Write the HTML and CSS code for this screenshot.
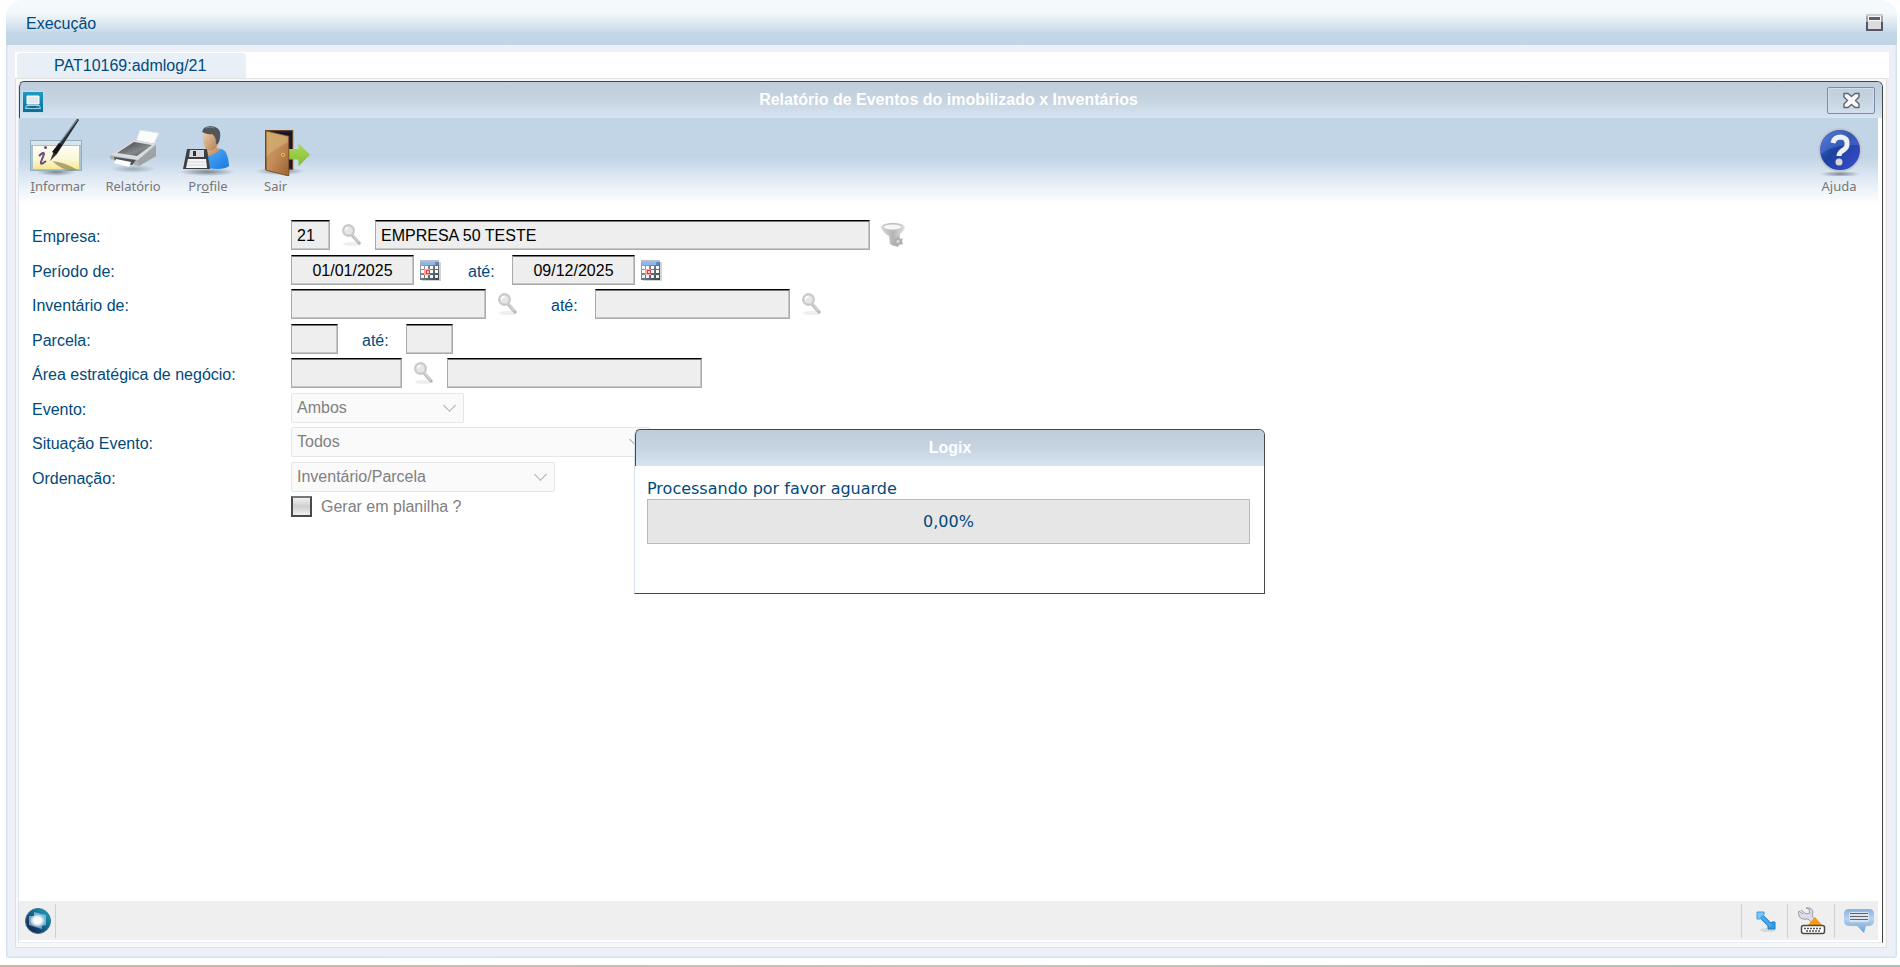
FILE: index.html
```html
<!DOCTYPE html>
<html lang="pt-BR">
<head>
<meta charset="utf-8">
<title>Execução</title>
<link rel="stylesheet" href="styles.css">
</head>
<body>
<svg class="defs" aria-hidden="true">
  <defs>
    <radialGradient id="shade"><stop offset="0" stop-color="#5d6670" stop-opacity=".75"/><stop offset="1" stop-color="#5d6670" stop-opacity="0"/></radialGradient>
    <linearGradient id="paper" x1="0" y1="0" x2="0" y2="1"><stop offset="0" stop-color="#fdfdf6"/><stop offset=".55" stop-color="#fbf8d8"/><stop offset="1" stop-color="#f7e98f"/></linearGradient>
    <linearGradient id="dark" x1="0" y1="0" x2="1" y2="1"><stop offset="0" stop-color="#3a3c3f"/><stop offset=".6" stop-color="#85888b"/><stop offset="1" stop-color="#55585b"/></linearGradient>
    <linearGradient id="skin" x1="0" y1="0" x2="1" y2="1"><stop offset="0" stop-color="#f3d3b4"/><stop offset="1" stop-color="#b07c4c"/></linearGradient>
    <linearGradient id="shirt" x1="0" y1="0" x2="1" y2="1"><stop offset="0" stop-color="#57b0f8"/><stop offset="1" stop-color="#1778e0"/></linearGradient>
    <linearGradient id="wood" x1="0" y1="0" x2="1" y2="1"><stop offset="0" stop-color="#c79c5c"/><stop offset=".45" stop-color="#c58f5c"/><stop offset="1" stop-color="#9c6230"/></linearGradient>
    <linearGradient id="leaf" x1="0" y1="0" x2="0" y2="1"><stop offset="0" stop-color="#a9dc5a"/><stop offset="1" stop-color="#86bb2e"/></linearGradient>
    <linearGradient id="help" x1="0" y1="0" x2="1" y2="1"><stop offset="0" stop-color="#4d78e0"/><stop offset=".45" stop-color="#1d409e"/><stop offset="1" stop-color="#3a4fd8"/></linearGradient>
    <linearGradient id="globe" x1="0" y1="1" x2="1" y2="0"><stop offset=".1" stop-color="#1e1c4c"/><stop offset=".5" stop-color="#0f6288"/><stop offset="1" stop-color="#0db2cf"/></linearGradient>
    <radialGradient id="glow"><stop offset="0" stop-color="#fff"/><stop offset=".55" stop-color="#fff" stop-opacity=".95"/><stop offset="1" stop-color="#cfe0ee" stop-opacity=".5"/></radialGradient>
    <linearGradient id="bubble" x1="0" y1="0" x2="0" y2="1"><stop offset="0" stop-color="#86b1de"/><stop offset=".4" stop-color="#b7d3ef"/><stop offset="1" stop-color="#6fa2d6"/></linearGradient>
    <linearGradient id="teal" x1="0" y1="0" x2="0" y2="1"><stop offset="0" stop-color="#1c9bc4"/><stop offset="1" stop-color="#0c6f98"/></linearGradient>
    <linearGradient id="steel" x1="0" y1="0" x2="1" y2="0"><stop offset="0" stop-color="#dcdcdc"/><stop offset=".5" stop-color="#b5b5b5"/><stop offset="1" stop-color="#e4e4e4"/></linearGradient>
    <linearGradient id="calbody" x1="0" y1="0" x2="1" y2="1"><stop offset="0" stop-color="#aab4bc"/><stop offset="1" stop-color="#3c4248"/></linearGradient>
    <symbol id="lens" viewBox="0 0 20 22">
      <ellipse cx="11" cy="20" rx="9" ry="2" fill="#efefef"/>
      <path d="M11 11l7 8" stroke="#b9b9b9" stroke-width="3.400" stroke-linecap="round"/>
      <path d="M11.500 11l6 7" stroke="#d8d8d8" stroke-width="1.200"/>
      <circle cx="7.500" cy="6.500" r="5.300" fill="#e6e6e6" stroke="#cbcbcb" stroke-width="2.400"/>
      <path d="M4.500 6.500a3 3 0 0 1 3-3" stroke="#fff" stroke-width="1.500" fill="none"/>
    </symbol>
    <symbol id="calendar" viewBox="0 0 21 21">
      <path d="M2 2h19v19H2z" fill="#d5d5d5"/>
      <path d="M0 0h19v20H0z" fill="url(#calbody)"/>
      <path d="M0 0h19v2H0z" fill="#b9bec4"/><path d="M1 2h17v3H1z" fill="#8fb6e6"/><path d="M15 2h3v3h-3z" fill="#5a8ad0"/>
      <path d="M1 6h3v3H1zM5 6h3v3H5zM10 6h3v3h-3zM15 6h3v3h-3z" fill="#fff"/>
      <path d="M1 10h3v3H1zM10 10h3v3h-3zM15 10h3v3h-3z" fill="#fff"/>
      <path d="M1 15h3v3H1zM5 15h3v3H5zM10 15h3v3h-3zM15 15h3v3h-3z" fill="#dffcfa"/>
      <path d="M4 9h6v6H4z" fill="#f7a49c"/><path d="M6 10h4v4H6z" fill="#ee4034"/><path d="M7 11h2v2H7z" fill="#ffd6d0"/>
    </symbol>
  </defs>
</svg>

<div class="shell">
  <header class="shell-bar">
    <h1>Execução</h1>
    <button type="button" class="restore" aria-label="Restaurar">
      <svg width="17" height="17" viewBox="0 0 17 17"><path d="M0 0h17v17H0z" fill="#54566a"/><path d="M0 0h17v8H0z" fill="#a4a5ad"/><path d="M0 0h17v2H0z" fill="#cfcfd2"/><path d="M2 2h13v13H2z" fill="#dcdcdc"/><path d="M2 2h13v5H2z" fill="#f8f8f8"/><path d="M3 3h11v3H3z" fill="#5b6078"/></svg>
    </button>
  </header>

  <div class="shell-body">
    <nav class="tabs"><a href="#programa" class="tab">PAT10169:admlog/21</a></nav>

    <div class="stage">
      <main class="window" id="programa">
        <header class="window-bar">
          <svg class="window-icon" width="22" height="22" viewBox="0 0 22 22"><path d="M0 0h22v22H0z" fill="#bfe0ee"/><path d="M1 1h20v20H1z" fill="url(#teal)"/><path d="M5 5h12v8H5z" fill="#e4e8ec" stroke="#fff"/><path d="M4.500 14.500h13l1 3h-15z" fill="#1d83a8" stroke="#9fd0e2"/><path d="M8 16h6" stroke="#0a4f6c"/></svg>
          <h2>Relatório de Eventos do imobilizado x Inventários</h2>
          <button type="button" class="close" aria-label="Fechar">
            <svg width="19" height="17" viewBox="0 0 19 17"><path d="M2 1.500h4l3.500 3 3.500-3h4v3.500l-3.500 3.500 3.500 3.500v3.500h-4l-3.500-3-3.500 3H2v-3.500l3.500-3.500L2 5z" fill="#f8f8f8" stroke="#5b6374" stroke-width="1.400" stroke-linejoin="round"/></svg>
          </button>
        </header>

        <div class="toolbar">
          <button type="button" class="tool">
            <svg width="60" height="58" viewBox="0 0 60 58">
              <ellipse cx="28" cy="54" rx="20" ry="4" fill="url(#shade)"/>
              <rect x="2.500" y="22.500" width="51" height="30" fill="#a9c3d1" stroke="#8fb0c0"/><path d="M3 23h50v4H3z" fill="#d9e4e9"/>
              <path d="M5 28h46v23H5z" fill="url(#paper)"/>
              <path d="M11 38q5-5 5-2l-3 8q-1 4 5-1" fill="none" stroke="#6d4f86" stroke-width="2"/><circle cx="17.500" cy="29.500" r="1.500" fill="#6d4f86"/>
              <path d="M24 43q12 1 26 9l-8 1q-9-2-18-10z" fill="#8a8660" opacity=".7"/>
              <path d="M22 43l4-10L48 2q2-2 3 0L29 36z" fill="#2d3236"/><path d="M30 27L49 2" stroke="#81939f" stroke-width="1.200"/><path d="M31 25l3 2-6 9-4-2z" fill="#111"/>
            </svg>
            <span><u>I</u>nformar</span>
          </button>
          <button type="button" class="tool">
            <svg width="60" height="58" viewBox="0 0 60 58">
              <ellipse cx="30" cy="51" rx="23" ry="4" fill="url(#shade)" opacity=".6"/>
              <path d="M37 12l19 3-9 19-16-5z" fill="#fbfcfc" stroke="#dde2e5"/>
              <path d="M7 37l24-15 22 4v12L36 48 7 41z" fill="#aeb1b4"/><path d="M7 37l24-15 22 4-18 16z" fill="#dadddf"/>
              <path d="M14 35l17-11 18 3-15 11z" fill="url(#dark)"/>
              <path d="M35 42l18-14v10L36 48z" fill="#9ea2a5"/><path d="M11 39l22 3-4 5-17-4z" fill="#4c4f52"/>
              <path d="M13 41l15 3-2 5-15-4z" fill="#fff"/>
            </svg>
            <span>Relatório</span>
          </button>
          <button type="button" class="tool">
            <svg width="60" height="58" viewBox="0 0 60 58">
              <ellipse cx="29" cy="54" rx="28" ry="4" fill="url(#shade)"/>
              <path d="M26 50q-1-10 5-16 6-4 12-3 7 1 8 17-3 3-12 3z" fill="url(#shirt)"/>
              <path d="M26 33l10-6 6 5q-7 6-14 6z" fill="url(#skin)"/>
              <path d="M25 15q8-8 15 0 2 17-8 18-8-2-7-18z" fill="url(#skin)"/>
              <path d="M24 14q1-6 9-6 11 1 9 12-1 7-4 6 0-8-4-10-4 1-10-2z" fill="#50565c"/>
              <path d="M28 10q5-2 8 0" stroke="#878d92" fill="none"/>
              <path d="M9 31h20l3 20H5z" fill="#3d4043"/><path d="M12 32h14v7H11z" fill="#d7d9db"/><path d="M15 33h3v5h-3z" fill="#303336"/>
              <path d="M10 41h18l1 9H8z" fill="#f5f5f5"/><path d="M10 44h17M9 47h18" stroke="#d5d8da"/>
            </svg>
            <span>Pr<u>o</u>file</span>
          </button>
          <button type="button" class="tool tool-exit">
            <svg width="60" height="58" viewBox="0 0 60 60">
              <ellipse cx="27" cy="55" rx="25" ry="4" fill="url(#shade)"/>
              <path d="M12 13h28v40H12z" fill="#171433" stroke="#6b4420" stroke-width="1.200"/>
              <path d="M34 32h12v-6l12 12-12 12v-7H34z" fill="url(#leaf)"/>
              <path d="M12.500 13.500L36 19v41l-23.500-6z" fill="url(#wood)" stroke="#7f5023"/><path d="M13 14l22 5v6Q22 31 13 40z" fill="#d9b97b" opacity=".5"/>
              <circle cx="30" cy="38" r="2" fill="#f5c542"/><circle cx="30" cy="38" r="1" fill="#a5661a"/>
            </svg>
            <span>Sair</span>
          </button>
          <button type="button" class="tool tool-help">
            <svg width="60" height="58" viewBox="0 0 60 58">
              <ellipse cx="31" cy="56" rx="20" ry="3" fill="url(#shade)"/>
              <circle cx="31" cy="32" r="21" fill="url(#help)" stroke="#c3c6cb" stroke-width="2"/>
              <path d="M12 37Q20 26 51 27a20.500 20.500 0 0 0-40 7z" fill="#7197ec" opacity=".3"/>
              <path d="M24 25q1-6 8-6 7 1 6 8 0 3-5 6-3 2-3 5" fill="none" stroke="#f0f0f0" stroke-width="5"/><circle cx="30" cy="44" r="3.500" fill="#d8d8d8"/>
            </svg>
            <span>Ajuda</span>
          </button>
        </div>

        <form class="form">
          <div class="row">
            <label class="caption" for="empresa">Empresa:</label>
            <input id="empresa" class="field w-company" type="text" value="21" readonly>
            <button type="button" class="lookup" disabled aria-label="Pesquisar empresa"><svg width="20" height="22"><use href="#lens"/></svg></button>
            <input class="field w-name after-lookup" type="text" value="EMPRESA 50 TESTE" readonly aria-label="Nome da empresa">
            <button type="button" class="lookup" disabled aria-label="Filtro"><svg width="24" height="24" viewBox="0 0 24 24"><path d="M0 4Q1 0 12 0t12 4q0 3-5 7v8l-4 4q-4 0-6-2l-1-8Q1 9 0 4z" fill="url(#steel)"/><ellipse cx="11.500" cy="4" rx="9.500" ry="3" fill="#f7f7f7" stroke="#c4c4c4"/><path d="M12 15l3 1 2-3 2 3 3-1-1 3 1 3-4 1-1 2-3-1-3-2 2-2z" fill="#b0b0b0"/><circle cx="17" cy="18.500" r="1.500" fill="#ddd"/></svg></button>
          </div>
          <div class="row">
            <label class="caption" for="periodo-de">Período de:</label>
            <input id="periodo-de" class="field w-date" type="text" value="01/01/2025" readonly>
            <button type="button" class="pick" aria-label="Calendário, data inicial"><svg width="21" height="21"><use href="#calendar"/></svg></button>
            <label class="until" for="periodo-ate">até:</label>
            <input id="periodo-ate" class="field w-date" type="text" value="09/12/2025" readonly>
            <button type="button" class="pick" aria-label="Calendário, data final"><svg width="21" height="21"><use href="#calendar"/></svg></button>
          </div>
          <div class="row">
            <label class="caption" for="inv-de">Inventário de:</label>
            <input id="inv-de" class="field w-inventory" type="text" readonly>
            <button type="button" class="lookup" disabled aria-label="Pesquisar inventário inicial"><svg width="20" height="22"><use href="#lens"/></svg></button>
            <label class="until" for="inv-ate">até:</label>
            <input id="inv-ate" class="field w-inventory" type="text" readonly>
            <button type="button" class="lookup" disabled aria-label="Pesquisar inventário final"><svg width="20" height="22"><use href="#lens"/></svg></button>
          </div>
          <div class="row">
            <label class="caption" for="parc-de">Parcela:</label>
            <input id="parc-de" class="field w-parcel" type="text" readonly>
            <label class="until" for="parc-ate">até:</label>
            <input id="parc-ate" class="field w-parcel" type="text" readonly>
          </div>
          <div class="row">
            <label class="caption" for="area">Área estratégica de negócio:</label>
            <input id="area" class="field w-area" type="text" readonly>
            <button type="button" class="lookup" disabled aria-label="Pesquisar área"><svg width="20" height="22"><use href="#lens"/></svg></button>
            <input class="field w-area-name after-lookup" type="text" readonly aria-label="Descrição da área">
          </div>
          <div class="row">
            <label class="caption" for="evento">Evento:</label>
            <span class="choice w-event"><select id="evento" disabled><option>Ambos</option></select></span>
          </div>
          <div class="row">
            <label class="caption" for="situacao">Situação Evento:</label>
            <span class="choice w-status"><select id="situacao" disabled><option>Todos</option></select></span>
          </div>
          <div class="row">
            <label class="caption" for="ordem">Ordenação:</label>
            <span class="choice w-order"><select id="ordem" disabled><option>Inventário/Parcela</option></select></span>
          </div>
          <div class="row row-check">
            <input id="planilha" class="tick" type="checkbox" disabled>
            <label class="tick-label" for="planilha">Gerar em planilha ?</label>
          </div>
        </form>

        <footer class="status">
          <span class="cell cell-first"><svg width="26" height="26" viewBox="0 0 26 26"><circle cx="13" cy="13" r="12.500" fill="url(#globe)" stroke="#3f6f8c"/><path d="M9 4l12 3v10l-4 1v3L4 17V8h5z" fill="#c6d7e8" opacity=".6"/><ellipse cx="12.500" cy="12.500" rx="7" ry="6" fill="url(#glow)"/></svg></span>
          <button type="button" class="cell cell-size" aria-label="Redimensionar"><svg width="22" height="22" viewBox="0 0 22 22"><ellipse cx="12" cy="20" rx="8" ry="2" fill="#d5d8da"/><path d="M5 6l10 10" stroke="#2d86c8" stroke-width="5"/><path d="M1 2h7v3l-4 4H1z" fill="#7cc8f8" stroke="#3c9ee4"/><path d="M19 19h-7v-3l4-4h3z" fill="#2f9bea" stroke="#1f7cc4"/><path d="M5 6l10 10" stroke="#4ba9ea" stroke-width="3"/></svg></button>
          <button type="button" class="cell cell-keys" aria-label="Configurações"><svg width="28" height="28" viewBox="0 0 28 28"><path d="M3 3l5 4 4-1-1-4-3-1q6-1 7 4l-1 4 5 6-3 3-6-6q-7 1-9-3-1-3 0-5l4 3" fill="#dcdde8" stroke="#9a9cad"/><path d="M10 18l7-8 7 8z" fill="#f59a12"/><rect x="3.500" y="18.500" width="23" height="8" rx="2" fill="#fff" stroke="#4b4b4b" stroke-width="1.500"/><path d="M6 21.500h18M8 24h14" stroke="#555" stroke-width="1.500" stroke-dasharray="2 1"/></svg></button>
          <button type="button" class="cell" aria-label="Mensagens"><svg width="30" height="26" viewBox="0 0 30 26"><path d="M5 1h20q5 0 5 5v7q0 5-6 5h-2l-2 7-7-7H6q-6 0-6-5V6q0-5 5-5z" fill="url(#bubble)"/><rect x="5" y="4" width="20" height="10" rx="2" fill="#dbe4ee"/><path d="M6 5.500h18M6 8.500h18M6 11.500h18" stroke="#5b6570" stroke-width="1.200"/></svg></button>
        </footer>
      </main>
    </div>
  </div>
</div>

<div class="overlay">
  <section class="dialog" role="dialog" aria-labelledby="dlg-title">
    <h2 class="dialog-bar" id="dlg-title">Logix</h2>
    <div class="dialog-body">
      <p id="dlg-text">Processando por favor aguarde</p>
      <div class="meter" role="progressbar" aria-valuenow="0" aria-labelledby="dlg-text">0,00%</div>
    </div>
  </section>
</div>
</body>
</html>
```
FILE: styles.css
```css
* { box-sizing: border-box; }

body {
  margin: 0;
  height: 100vh;
  padding: 0 3px 7px 6px;
  display: flex;
  flex-direction: column;
  overflow: hidden;
  background: linear-gradient(90deg, #cbb5a8, #c9c4ba 50%, #adc0b6) bottom / 100% 2px no-repeat #fff;
  color: #004a7c;
  font: 16px/20px Arial, "Liberation Sans", sans-serif;
}

h1, h2, p { margin: 0; font-size: 16px; line-height: 20px; }

button {
  margin: 0;
  padding: 0;
  border: 0;
  background: none;
  font: inherit;
  color: inherit;
}

svg { display: block; flex: none; }
.defs { position: absolute; width: 0; height: 0; }

/* outer frame */
.shell { flex: 1; display: flex; flex-direction: column; margin-bottom: 2px; min-height: 0; }

.shell-bar {
  height: 45px;
  padding: 0 14px 0 20px;
  display: flex;
  align-items: center;
  justify-content: space-between;
  border-radius: 16px 16px 0 0;
  background: linear-gradient(#f4f9fd, #f4f9fc 12px, #edf4f8 16px, #c3d6e7 34px, #c2d5e7);
}

.shell-bar h1 { font-weight: 400; padding-top: 2px; }

.shell-body {
  flex: 1;
  display: flex;
  flex-direction: column;
  min-height: 0;
  padding: 7px 7px 9px 8px;
  background: #edf1f7;
  border: 1px solid #d3e2f1;
  border-top: 0;
  box-shadow: inset 1px -1px #dfeaf5, inset -1px 0 #dfeaf5;
  border-radius: 0 0 3px 3px;
}

.tabs { display: flex; align-items: flex-start; height: 26px; padding: 1px 0 0 2px; background: #fff; }

.tab {
  padding: 3px 40px 2px 37px;
  border-radius: 4px 4px 0 0;
  background: #e8eff7;
  color: inherit;
  text-decoration: none;
}

.stage {
  flex: 1;
  display: flex;
  min-height: 0;
  margin-right: 2px;
  padding: 2px 3px 4px 2px;
  background: #f8f8f8;
  border: 1px solid #e0e0e0;
}

/* program window */
.window {
  flex: 1;
  display: flex;
  flex-direction: column;
  min-width: 0;
  border: 1px solid #444;
  border-left-color: #dce6f2;
  border-bottom-color: #e6eaf2;
  border-radius: 6px 6px 0 0;
  background: #fff;
}

.window-bar {
  height: 36px;
  padding: 0 7px 0 2px;
  display: grid;
  grid-template-columns: 48px 1fr 48px;
  align-items: center;
  border-left: 1px solid #444;
  border-radius: 5px 5px 0 0;
  background: linear-gradient(#bfccdb, #c6d3e0 50%, #d7e4f1);
}

.window-bar h2, .dialog-bar { color: #fff; text-align: center; font-weight: 700; }
.window-icon { margin-top: 4px; }

.close {
  display: flex;
  align-items: center;
  justify-content: center;
  height: 27px;
  border: 1px solid #7e8ca3;
  border-radius: 2px;
  box-shadow: inset 0 0 0 1px #d3deea;
}

.toolbar {
  display: flex;
  gap: 15px;
  height: 90px;
  margin-right: 4px;
  padding-left: 9px;
  background: linear-gradient(#c2d5e7, #c2d5e7 44%, #e3ecf5 70%, #fff 96%);
}

.tool {
  width: 60px;
  display: flex;
  flex-direction: column;
  align-items: center;
  color: #777;
  font: 13px/20px "Noto Sans", sans-serif;
}

.tool-exit span { align-self: flex-start; padding-left: 11px; }
.tool-help { margin-left: auto; margin-right: 9px; }

/* parameters */
.form { flex: 1; padding: 12px 13px; }

.row { display: flex; align-items: center; height: 30px; margin-bottom: 5px; }
.row:nth-child(even) { margin-bottom: 4px; }
.caption { width: 259px; padding-top: 4px; }
.until { width: 27px; margin: 0 17px 0 24px; padding-top: 4px; }

.field {
  height: 30px;
  padding: 1px 5px 0;
  border: 1px solid #aaa;
  border-top-color: #000;
  border-radius: 0;
  background: #eee;
  box-shadow: inset 0 1px #777, inset -1px -1px #c6c6c6;
  color: #000;
  font: inherit;
}

.w-company { width: 39px; }
.w-name { width: 495px; }
.w-date { width: 123px; text-align: center; }
.w-inventory { width: 195px; }
.w-parcel { width: 47px; }
.w-area { width: 111px; }
.w-area-name { width: 255px; }
.after-lookup { margin-left: 4px; }
.w-event { width: 173px; }
.w-status { width: 359px; }
.w-order { width: 264px; }

.lookup { margin: 0 10px 0 11px; }
.pick { margin: 0 3px 0 6px; }

.choice { position: relative; }

.choice select {
  width: 100%;
  height: 30px;
  padding: 0 5px;
  appearance: none;
  border: 1px solid #e6e6e6;
  border-radius: 2px;
  background: #fafafa;
  color: #808080;
  font: inherit;
  opacity: 1;
}

.choice::after {
  content: "";
  position: absolute;
  right: 10px;
  top: 8px;
  width: 8px;
  height: 8px;
  border: solid #aaa;
  border-width: 0 1px 1px 0;
  transform: rotate(45deg);
}

.row-check { height: 21px; padding-left: 259px; }

.tick {
  appearance: none;
  width: 21px;
  height: 21px;
  margin: 0 9px 0 0;
  border: 2px solid #4a4a4a;
  border-top-color: #777;
  background: linear-gradient(#f0f0f0, #cfcfcf 50%, #f0f0f0);
}

.tick-label { color: #808080; }

/* status bar */
.status {
  display: flex;
  align-items: center;
  height: 39px;
  margin: 0 4px 2px 0;
  background: #efefef;
}

.cell { display: flex; align-items: center; height: 34px; padding: 0 4px 0 9px; border-left: 1px solid #cfcfcf; }
.cell-first { padding: 0 4px 0 6px; margin-right: auto; border-left: 0; border-right: 1px solid #cfcfcf; }
.cell-size { padding: 0 9px 0 14px; }
.cell-keys { padding: 0 8px 0 10px; }

/* progress dialog */
.overlay {
  position: fixed;
  inset: 56px 1px 0 0;
  display: flex;
  align-items: center;
  justify-content: center;
}

.dialog {
  width: 631px;
  border: 1px solid #484848;
  border-left-color: #d5e2ef;
  border-radius: 6px 6px 0 0;
  background: #fff;
}

.dialog-bar {
  padding: 8px 0;
  border-left: 1px solid #484848;
  border-radius: 5px 5px 0 0;
  background: linear-gradient(#bfccdb, #c6d3e0 50%, #d7e4f1);
}

.dialog-body {
  padding: 13px 14px 49px 12px;
  font: 16px/20px Verdana, "DejaVu Sans", sans-serif;
}

.meter {
  height: 45px;
  display: flex;
  align-items: center;
  justify-content: center;
  border: 1px solid #b9b9b9;
  background: #e6e6e6;
}
```
